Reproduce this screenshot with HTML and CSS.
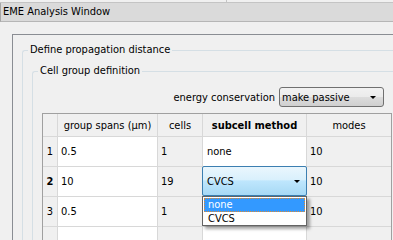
FILE: index.html
```html
<!DOCTYPE html>
<html>
<head>
    <title>EME Analysis Window</title>
    <link rel="stylesheet" href="styles.css">
</head>
<body>
    <div class="topstrip"><div class="topstrip-sep"></div></div>
    <div class="titlebar">EME Analysis Window</div>

    <div class="frame">
        <fieldset class="group">
            <legend>Define propagation distance</legend>
            <fieldset class="group inner">
                <legend>Cell group definition</legend>

                <div class="energy-row">
                    <span class="energy-label">energy conservation</span>
                    <div class="select">
                        <span>make passive</span>
                        <span class="arrow"></span>
                    </div>
                </div>

                <div class="grid">
                    <div class="hd"></div>
                    <div class="hd">group spans (µm)</div>
                    <div class="hd">cells</div>
                    <div class="hd bold">subcell method</div>
                    <div class="hd">modes</div>

                    <div class="num">1</div>
                    <div class="cell edit">0.5</div>
                    <div class="cell">1</div>
                    <div class="cell edit sub">none</div>
                    <div class="cell">10</div>

                    <div class="num bold">2</div>
                    <div class="cell edit">10</div>
                    <div class="cell">19</div>
                    <div class="cell edit combo-cell">
                        <div class="combo">
                            <span>CVCS</span>
                            <span class="arrow"></span>
                            <div class="list">
                                <div class="item active">none</div>
                                <div class="item">CVCS</div>
                            </div>
                        </div>
                    </div>
                    <div class="cell">10</div>

                    <div class="num">3</div>
                    <div class="cell edit">0.5</div>
                    <div class="cell">1</div>
                    <div class="cell edit sub"></div>
                    <div class="cell">10</div>

                    <div class="num"></div>
                    <div class="cell edit"></div>
                    <div class="cell"></div>
                    <div class="cell edit"></div>
                    <div class="cell"></div>
                </div>
            </fieldset>
        </fieldset>
    </div>
</body>
</html>
```

FILE: styles.css
```css
html, body {
    margin: 0;
    height: 100%;
    overflow: hidden;
}
body {
    background-color: #f0f0f0;
    font-family: "DejaVu Sans Condensed", "DejaVu Sans", sans-serif;
    font-size: 11px;
    color: #000;
}
.topstrip {
    height: 2px;
    border-bottom: 1px solid #c4c4c4;
}
.topstrip-sep {
    margin-left: 226px;
    width: 1px;
    height: 2px;
    background-color: #c4c4c4;
}
.titlebar {
    height: 18px;
    line-height: 18px;
    padding-left: 2px;
    background-color: #dadada;
    border-left: 1px solid #a6a6a6;
    border-bottom: 1px solid #b6b6b6;
}
.frame {
    margin: 12px 0 0 12px;
    padding: 8px 0 0 9px;
    border-top: 1px solid #8a8d93;
    border-left: 1px solid #8a8d93;
    height: 400px;
}
.group {
    margin: 0;
    padding: 0 0 0 9px;
    border: 1px solid #d5dfe5;
    border-right: none;
    border-bottom: none;
    border-top-left-radius: 3px;
    height: 400px;
    min-width: 0;
}
.group legend {
    margin-left: -4px;
    padding: 0 2px;
    line-height: 14px;
}
.inner {
    margin-top: 7px;
}
.energy-row {
    display: flex;
    justify-content: flex-end;
    align-items: center;
    gap: 4px;
    margin-top: 9px;
    padding-right: 9px;
    height: 20px;
}
.select {
    display: flex;
    align-items: center;
    justify-content: space-between;
    box-sizing: border-box;
    width: 105px;
    height: 20px;
    padding: 0 7px 0 2px;
    border: 1px solid #707070;
    border-radius: 3px;
    background: linear-gradient(#f2f2f2 0%, #ebebeb 50%, #dddddd 50%, #cfcfcf 100%);
}
.arrow {
    width: 0;
    height: 0;
    border-left: 3px solid transparent;
    border-right: 3px solid transparent;
    border-top: 3px solid #000;
}
.grid {
    display: grid;
    grid-template-columns: 14px 99px 44px 103px 84px;
    grid-template-rows: 22px;
    grid-auto-rows: 29px;
    gap: 1px;
    margin-top: 6px;
    width: 348px;
    border: 1px solid #a0a0a0;
    background-color: #d8d8d8;
}
.hd {
    background-color: #f0f0f0;
    display: flex;
    align-items: center;
    justify-content: center;
    white-space: nowrap;
}
.bold {
    font-weight: bold;
}
.num {
    background-color: #f0f0f0;
    display: flex;
    align-items: center;
    justify-content: center;
}
.cell {
    background-color: #f0f0f0;
    display: flex;
    align-items: center;
    padding-left: 3px;
}
.edit {
    background-color: #fff;
}
.sub {
    padding-left: 4px;
}
.combo-cell {
    position: relative;
    padding: 0;
}
.combo {
    position: relative;
    box-sizing: border-box;
    margin: -1px -1px 0 -1px;
    width: 105px;
    height: 30px;
    display: flex;
    align-items: center;
    justify-content: space-between;
    padding: 0 6px 0 4px;
    border: 1px solid #3c7fb1;
    border-radius: 2px;
    background: linear-gradient(#eaf6fd 0%, #d9f0fc 45%, #bee6fd 50%, #a7d9f5 100%);
}
.list {
    position: absolute;
    top: calc(100% + 1px);
    left: -1px;
    box-sizing: border-box;
    width: 105px;
    height: 30px;
    padding: 1px 1px 0 1px;
    border: 1px solid #646464;
    background-color: #fff;
    box-shadow: 3px 3px 3px rgba(0, 0, 0, 0.35);
    z-index: 10;
}
.item {
    box-sizing: border-box;
    height: 14px;
    line-height: 12px;
    padding-left: 3px;
    border: 1px solid transparent;
}
.item.active {
    background-color: #3399ff;
    color: #fff;
    border: 1px dotted #e08a30;
}
```
